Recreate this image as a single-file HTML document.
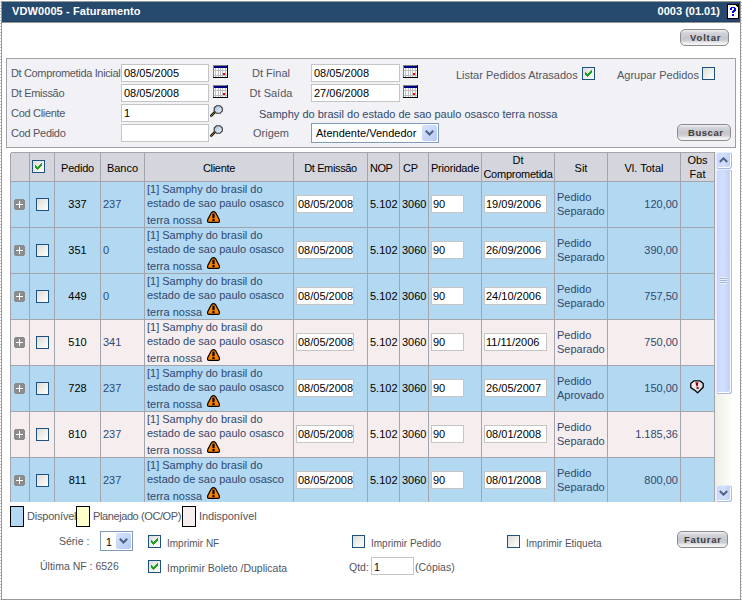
<!DOCTYPE html>
<html><head><meta charset="utf-8"><style>
html,body{margin:0;padding:0;background:#fff;width:742px;height:601px;overflow:hidden;position:relative}
body{font-family:"Liberation Sans",sans-serif;font-size:11px}
.t{position:absolute;white-space:nowrap;line-height:13px;font-family:"Liberation Sans",sans-serif}
</style></head><body>
<div style="position:absolute;left:0;top:0;width:1px;height:601px;background:repeating-linear-gradient(#fff 0 2px,#c4c4c4 2px 3px)"></div>
<div style="position:absolute;left:741px;top:0;width:1px;height:601px;background:repeating-linear-gradient(#fff 0 2px,#c4c4c4 2px 3px)"></div>
<div style="position:absolute;left:1px;top:1px;width:740px;height:599px;box-sizing:border-box;border:1px solid #9a9a9a;"></div>
<div style="position:absolute;left:2px;top:2px;width:738px;height:20px;box-sizing:border-box;background:#264a6e;border-bottom:1px solid #1f4068;"></div>
<div style="position:absolute;left:2px;top:22px;width:738px;height:1px;box-sizing:border-box;background:#9a9690;"></div>
<div class="t" style="left:12px;top:5px;font-size:11px;color:#fff;font-weight:bold;letter-spacing:0.1px;">VDW0005 - Faturamento</div>
<div class="t" style="right:22px;top:5px;font-size:11px;color:#fff;font-weight:bold;">0003 (01.01)</div>
<svg style="position:absolute;left:726px;top:3px" width="14" height="17" shape-rendering="crispEdges"><rect x="0" y="0" width="14" height="17" fill="#2e3d68"/><g transform="translate(1,1)"><rect x="0" y="0" width="12" height="15" fill="#000"/><path d="M1 1H9V2H10V3H11V14H1Z" fill="#fff"/><rect x="2" y="2" width="1" height="1" fill="#ffff00"/><rect x="2" y="4" width="1" height="1" fill="#ffff00"/><rect x="2" y="6" width="1" height="1" fill="#ffff00"/><rect x="2" y="8" width="1" height="1" fill="#ffff00"/><rect x="2" y="10" width="1" height="1" fill="#ffff00"/><rect x="2" y="12" width="1" height="1" fill="#ffff00"/><rect x="4" y="1" width="1" height="1" fill="#ffff00"/><rect x="4" y="3" width="1" height="1" fill="#ffff00"/><rect x="4" y="9" width="1" height="1" fill="#ffff00"/><rect x="4" y="11" width="1" height="1" fill="#ffff00"/><rect x="6" y="1" width="1" height="1" fill="#ffff00"/><rect x="6" y="12" width="1" height="1" fill="#ffff00"/><rect x="8" y="1" width="1" height="1" fill="#ffff00"/><rect x="8" y="7" width="1" height="1" fill="#ffff00"/><rect x="8" y="9" width="1" height="1" fill="#ffff00"/><rect x="8" y="11" width="1" height="1" fill="#ffff00"/><rect x="9" y="2" width="1" height="1" fill="#ffff00"/><rect x="4" y="5" width="1" height="1" fill="#ffff00"/><rect x="6" y="3" width="1" height="1" fill="#ffff00"/><rect x="4" y="3" width="1" height="1" fill="#0000ff"/><rect x="5" y="3" width="1" height="1" fill="#0000ff"/><rect x="6" y="3" width="1" height="1" fill="#0000ff"/><rect x="7" y="3" width="1" height="1" fill="#0000ff"/><rect x="3" y="4" width="1" height="1" fill="#0000ff"/><rect x="4" y="4" width="1" height="1" fill="#0000ff"/><rect x="7" y="4" width="1" height="1" fill="#0000ff"/><rect x="8" y="4" width="1" height="1" fill="#0000ff"/><rect x="3" y="5" width="1" height="1" fill="#0000ff"/><rect x="4" y="5" width="1" height="1" fill="#0000ff"/><rect x="7" y="5" width="1" height="1" fill="#0000ff"/><rect x="8" y="5" width="1" height="1" fill="#0000ff"/><rect x="6" y="6" width="1" height="1" fill="#0000ff"/><rect x="7" y="6" width="1" height="1" fill="#0000ff"/><rect x="8" y="6" width="1" height="1" fill="#0000ff"/><rect x="5" y="7" width="1" height="1" fill="#0000ff"/><rect x="6" y="7" width="1" height="1" fill="#0000ff"/><rect x="7" y="7" width="1" height="1" fill="#0000ff"/><rect x="5" y="8" width="1" height="1" fill="#0000ff"/><rect x="6" y="8" width="1" height="1" fill="#0000ff"/><rect x="5" y="10" width="1" height="1" fill="#0000ff"/><rect x="6" y="10" width="1" height="1" fill="#0000ff"/><rect x="5" y="11" width="1" height="1" fill="#0000ff"/><rect x="6" y="11" width="1" height="1" fill="#0000ff"/></g></svg>
<div style="position:absolute;left:680px;top:29px;width:49px;height:17px;box-sizing:border-box;border:1px solid #8c8c8c;border-radius:5px;background:linear-gradient(#f0f0f3 0%,#d2d2d9 20%,#c5c5cd 55%,#d0d0d6 72%,#ececef 85%,#f6f6f6 100%);"></div>
<div class="t" style="left:690px;top:31px;font-size:9.5px;color:#3e3e3e;font-weight:bold;letter-spacing:0.85px;">Voltar</div>
<div style="position:absolute;left:6px;top:58px;width:730px;height:90px;box-sizing:border-box;background:#f1f1f6;border:1px solid #a0a0a0;"></div>
<div class="t" style="left:11px;top:67px;font-size:11px;color:#52565f;letter-spacing:-0.35px;">Dt Comprometida Inicial</div>
<div style="position:absolute;left:121px;top:64px;width:88px;height:18px;box-sizing:border-box;background:#fff;border:1px solid #c5c5c5;"></div>
<div class="t" style="left:124px;top:67px;font-size:11px;color:#000;">08/05/2005</div>
<div class="t" style="left:11px;top:87px;font-size:11px;color:#52565f;letter-spacing:-0.3px;">Dt Emissão</div>
<div style="position:absolute;left:121px;top:84px;width:88px;height:18px;box-sizing:border-box;background:#fff;border:1px solid #c5c5c5;"></div>
<div class="t" style="left:124px;top:87px;font-size:11px;color:#000;">08/05/2008</div>
<div class="t" style="left:11px;top:107px;font-size:11px;color:#52565f;letter-spacing:-0.3px;">Cod Cliente</div>
<div style="position:absolute;left:121px;top:104px;width:88px;height:18px;box-sizing:border-box;background:#fff;border:1px solid #c5c5c5;"></div>
<div class="t" style="left:124px;top:107px;font-size:11px;color:#000;">1</div>
<div class="t" style="left:11px;top:127px;font-size:11px;color:#52565f;letter-spacing:-0.3px;">Cod Pedido</div>
<div style="position:absolute;left:121px;top:124px;width:88px;height:18px;box-sizing:border-box;background:#fff;border:1px solid #c5c5c5;"></div>
<svg style="position:absolute;left:213px;top:65px" width="15" height="13" shape-rendering="crispEdges"><rect x="0" y="0" width="15" height="13" fill="#000"/><rect x="0" y="0" width="14" height="12" fill="#808080"/><rect x="1" y="3" width="13" height="9" fill="#fff"/><rect x="1" y="1" width="13" height="2" fill="#000080"/><rect x="2" y="3" width="1" height="9" fill="#c0c0c0"/><rect x="5" y="3" width="1" height="9" fill="#c0c0c0"/><rect x="7" y="3" width="1" height="9" fill="#c0c0c0"/><rect x="9" y="3" width="1" height="9" fill="#c0c0c0"/><rect x="12" y="3" width="1" height="9" fill="#c0c0c0"/><rect x="1" y="5" width="13" height="1" fill="#c0c0c0"/><rect x="1" y="10" width="13" height="1" fill="#c0c0c0"/><rect x="10" y="8" width="2" height="2" fill="#ff0000"/></svg>
<svg style="position:absolute;left:213px;top:85px" width="15" height="13" shape-rendering="crispEdges"><rect x="0" y="0" width="15" height="13" fill="#000"/><rect x="0" y="0" width="14" height="12" fill="#808080"/><rect x="1" y="3" width="13" height="9" fill="#fff"/><rect x="1" y="1" width="13" height="2" fill="#000080"/><rect x="2" y="3" width="1" height="9" fill="#c0c0c0"/><rect x="5" y="3" width="1" height="9" fill="#c0c0c0"/><rect x="7" y="3" width="1" height="9" fill="#c0c0c0"/><rect x="9" y="3" width="1" height="9" fill="#c0c0c0"/><rect x="12" y="3" width="1" height="9" fill="#c0c0c0"/><rect x="1" y="5" width="13" height="1" fill="#c0c0c0"/><rect x="1" y="10" width="13" height="1" fill="#c0c0c0"/><rect x="10" y="8" width="2" height="2" fill="#ff0000"/></svg>
<svg style="position:absolute;left:210px;top:105px" width="13" height="12"><defs><linearGradient id="mg" x1="0" y1="0" x2="1" y2="1"><stop offset="0" stop-color="#a9c0e0"/><stop offset="0.6" stop-color="#d0def0"/><stop offset="1" stop-color="#ffffff"/></linearGradient></defs><line x1="1.3" y1="10.7" x2="5.6" y2="6.4" stroke="#111" stroke-width="2.4" stroke-linecap="round"/><line x1="1.3" y1="10.7" x2="5.6" y2="6.4" stroke="#f0b000" stroke-width="1" stroke-dasharray="0.9 0.6"/><path d="M6.5 0.7 H10 L12.3 3 V6 L10 8.3 H6.5 L4.2 6 V3 Z" fill="url(#mg)" stroke="#333" stroke-width="1.1"/></svg>
<svg style="position:absolute;left:210px;top:125px" width="13" height="12"><defs><linearGradient id="mg" x1="0" y1="0" x2="1" y2="1"><stop offset="0" stop-color="#a9c0e0"/><stop offset="0.6" stop-color="#d0def0"/><stop offset="1" stop-color="#ffffff"/></linearGradient></defs><line x1="1.3" y1="10.7" x2="5.6" y2="6.4" stroke="#111" stroke-width="2.4" stroke-linecap="round"/><line x1="1.3" y1="10.7" x2="5.6" y2="6.4" stroke="#f0b000" stroke-width="1" stroke-dasharray="0.9 0.6"/><path d="M6.5 0.7 H10 L12.3 3 V6 L10 8.3 H6.5 L4.2 6 V3 Z" fill="url(#mg)" stroke="#333" stroke-width="1.1"/></svg>
<div class="t" style="left:240px;width:62px;text-align:center;top:67px;font-size:11px;color:#52565f;">Dt Final</div>
<div class="t" style="left:240px;width:62px;text-align:center;top:87px;font-size:11px;color:#52565f;">Dt Saída</div>
<div class="t" style="left:259px;top:108px;font-size:11px;color:#30496e;">Samphy do brasil do estado de sao paulo osasco terra nossa</div>
<div class="t" style="left:240px;width:62px;text-align:center;top:127px;font-size:11px;color:#52565f;">Origem</div>
<div style="position:absolute;left:311px;top:64px;width:89px;height:18px;box-sizing:border-box;background:#fff;border:1px solid #c5c5c5;"></div>
<div class="t" style="left:314px;top:67px;font-size:11px;color:#000;">08/05/2008</div>
<div style="position:absolute;left:311px;top:84px;width:89px;height:18px;box-sizing:border-box;background:#fff;border:1px solid #c5c5c5;"></div>
<div class="t" style="left:314px;top:87px;font-size:11px;color:#000;">27/06/2008</div>
<svg style="position:absolute;left:403px;top:65px" width="15" height="13" shape-rendering="crispEdges"><rect x="0" y="0" width="15" height="13" fill="#000"/><rect x="0" y="0" width="14" height="12" fill="#808080"/><rect x="1" y="3" width="13" height="9" fill="#fff"/><rect x="1" y="1" width="13" height="2" fill="#000080"/><rect x="2" y="3" width="1" height="9" fill="#c0c0c0"/><rect x="5" y="3" width="1" height="9" fill="#c0c0c0"/><rect x="7" y="3" width="1" height="9" fill="#c0c0c0"/><rect x="9" y="3" width="1" height="9" fill="#c0c0c0"/><rect x="12" y="3" width="1" height="9" fill="#c0c0c0"/><rect x="1" y="5" width="13" height="1" fill="#c0c0c0"/><rect x="1" y="10" width="13" height="1" fill="#c0c0c0"/><rect x="10" y="8" width="2" height="2" fill="#ff0000"/></svg>
<svg style="position:absolute;left:403px;top:85px" width="15" height="13" shape-rendering="crispEdges"><rect x="0" y="0" width="15" height="13" fill="#000"/><rect x="0" y="0" width="14" height="12" fill="#808080"/><rect x="1" y="3" width="13" height="9" fill="#fff"/><rect x="1" y="1" width="13" height="2" fill="#000080"/><rect x="2" y="3" width="1" height="9" fill="#c0c0c0"/><rect x="5" y="3" width="1" height="9" fill="#c0c0c0"/><rect x="7" y="3" width="1" height="9" fill="#c0c0c0"/><rect x="9" y="3" width="1" height="9" fill="#c0c0c0"/><rect x="12" y="3" width="1" height="9" fill="#c0c0c0"/><rect x="1" y="5" width="13" height="1" fill="#c0c0c0"/><rect x="1" y="10" width="13" height="1" fill="#c0c0c0"/><rect x="10" y="8" width="2" height="2" fill="#ff0000"/></svg>
<div style="position:absolute;left:311px;top:123px;width:128px;height:20px;box-sizing:border-box;background:#fff;border:1px solid #7f9db9;"></div>
<div style="position:absolute;left:422px;top:125px;width:15px;height:16px;border-radius:2px;background:linear-gradient(135deg,#d8e4fc,#b4c9f6);"></div>
<svg style="position:absolute;left:425px;top:130px" width="9" height="6"><path d="M0.8 0.8 L4.5 4.5 L8.2 0.8" stroke="#4d6185" stroke-width="2" fill="none"/></svg>
<div class="t" style="left:316px;top:127px;font-size:11px;color:#000;">Atendente/Vendedor</div>
<div class="t" style="left:456px;top:69px;font-size:11px;color:#52565f;">Listar Pedidos Atrasados</div>
<svg style="position:absolute;left:582px;top:67px" width="13" height="13" shape-rendering="crispEdges"><defs><linearGradient id="cbg" x1="0" y1="0" x2="1" y2="1"><stop offset="0" stop-color="#dcdcd7"/><stop offset="1" stop-color="#ffffff"/></linearGradient></defs><rect x="0" y="0" width="13" height="13" fill="#1c5180"/><rect x="1" y="1" width="11" height="11" fill="url(#cbg)"/><rect x="9" y="3" width="1" height="1" fill="#21a121"/><rect x="8" y="4" width="1" height="1" fill="#21a121"/><rect x="9" y="4" width="1" height="1" fill="#21a121"/><rect x="3" y="5" width="1" height="1" fill="#21a121"/><rect x="7" y="5" width="1" height="1" fill="#21a121"/><rect x="8" y="5" width="1" height="1" fill="#21a121"/><rect x="9" y="5" width="1" height="1" fill="#21a121"/><rect x="3" y="6" width="1" height="1" fill="#21a121"/><rect x="4" y="6" width="1" height="1" fill="#21a121"/><rect x="6" y="6" width="1" height="1" fill="#21a121"/><rect x="7" y="6" width="1" height="1" fill="#21a121"/><rect x="8" y="6" width="1" height="1" fill="#21a121"/><rect x="3" y="7" width="1" height="1" fill="#21a121"/><rect x="4" y="7" width="1" height="1" fill="#21a121"/><rect x="5" y="7" width="1" height="1" fill="#21a121"/><rect x="6" y="7" width="1" height="1" fill="#21a121"/><rect x="7" y="7" width="1" height="1" fill="#21a121"/><rect x="4" y="8" width="1" height="1" fill="#21a121"/><rect x="5" y="8" width="1" height="1" fill="#21a121"/><rect x="6" y="8" width="1" height="1" fill="#21a121"/><rect x="5" y="9" width="1" height="1" fill="#21a121"/></svg>
<div class="t" style="left:617px;top:69px;font-size:11px;color:#52565f;">Agrupar Pedidos</div>
<svg style="position:absolute;left:702px;top:67px" width="13" height="13" shape-rendering="crispEdges"><defs><linearGradient id="cbg" x1="0" y1="0" x2="1" y2="1"><stop offset="0" stop-color="#dcdcd7"/><stop offset="1" stop-color="#ffffff"/></linearGradient></defs><rect x="0" y="0" width="13" height="13" fill="#1c5180"/><rect x="1" y="1" width="11" height="11" fill="url(#cbg)"/></svg>
<div style="position:absolute;left:677px;top:124px;width:54px;height:17px;box-sizing:border-box;border:1px solid #8c8c8c;border-radius:5px;background:linear-gradient(#f0f0f3 0%,#d2d2d9 20%,#c5c5cd 55%,#d0d0d6 72%,#ececef 85%,#f6f6f6 100%);"></div>
<div class="t" style="left:688px;top:126px;font-size:9.5px;color:#3e3e3e;font-weight:bold;letter-spacing:0.55px;">Buscar</div>
<div style="position:absolute;left:10px;top:152px;width:705px;height:30px;box-sizing:border-box;background:#d5d6dd;"></div>
<div style="position:absolute;left:10px;top:181px;width:705px;height:47px;box-sizing:border-box;background:#b2d8f2;"></div>
<div style="position:absolute;left:10px;top:227px;width:705px;height:47px;box-sizing:border-box;background:#b2d8f2;"></div>
<div style="position:absolute;left:10px;top:273px;width:705px;height:47px;box-sizing:border-box;background:#b2d8f2;"></div>
<div style="position:absolute;left:10px;top:319px;width:705px;height:47px;box-sizing:border-box;background:#f6eeee;"></div>
<div style="position:absolute;left:10px;top:365px;width:705px;height:47px;box-sizing:border-box;background:#b2d8f2;"></div>
<div style="position:absolute;left:10px;top:411px;width:705px;height:47px;box-sizing:border-box;background:#f6eeee;"></div>
<div style="position:absolute;left:10px;top:457px;width:705px;height:45px;box-sizing:border-box;background:#b2d8f2;"></div>
<div style="position:absolute;left:10px;top:152px;width:1px;height:350px;box-sizing:border-box;background:#a2a5ab;"></div>
<div style="position:absolute;left:29px;top:152px;width:1px;height:350px;box-sizing:border-box;background:#a2a5ab;"></div>
<div style="position:absolute;left:54px;top:152px;width:1px;height:350px;box-sizing:border-box;background:#a2a5ab;"></div>
<div style="position:absolute;left:100px;top:152px;width:1px;height:350px;box-sizing:border-box;background:#a2a5ab;"></div>
<div style="position:absolute;left:144px;top:152px;width:1px;height:350px;box-sizing:border-box;background:#a2a5ab;"></div>
<div style="position:absolute;left:293px;top:152px;width:1px;height:350px;box-sizing:border-box;background:#a2a5ab;"></div>
<div style="position:absolute;left:367px;top:152px;width:1px;height:350px;box-sizing:border-box;background:#a2a5ab;"></div>
<div style="position:absolute;left:399px;top:152px;width:1px;height:350px;box-sizing:border-box;background:#a2a5ab;"></div>
<div style="position:absolute;left:428px;top:152px;width:1px;height:350px;box-sizing:border-box;background:#a2a5ab;"></div>
<div style="position:absolute;left:481px;top:152px;width:1px;height:350px;box-sizing:border-box;background:#a2a5ab;"></div>
<div style="position:absolute;left:554px;top:152px;width:1px;height:350px;box-sizing:border-box;background:#a2a5ab;"></div>
<div style="position:absolute;left:607px;top:152px;width:1px;height:350px;box-sizing:border-box;background:#a2a5ab;"></div>
<div style="position:absolute;left:680px;top:152px;width:1px;height:350px;box-sizing:border-box;background:#a2a5ab;"></div>
<div style="position:absolute;left:714px;top:152px;width:1px;height:350px;box-sizing:border-box;background:#a2a5ab;"></div>
<div style="position:absolute;left:10px;top:181px;width:705px;height:1px;box-sizing:border-box;background:#a2a5ab;"></div>
<div style="position:absolute;left:10px;top:227px;width:705px;height:1px;box-sizing:border-box;background:#a2a5ab;"></div>
<div style="position:absolute;left:10px;top:273px;width:705px;height:1px;box-sizing:border-box;background:#a2a5ab;"></div>
<div style="position:absolute;left:10px;top:319px;width:705px;height:1px;box-sizing:border-box;background:#a2a5ab;"></div>
<div style="position:absolute;left:10px;top:365px;width:705px;height:1px;box-sizing:border-box;background:#a2a5ab;"></div>
<div style="position:absolute;left:10px;top:411px;width:705px;height:1px;box-sizing:border-box;background:#a2a5ab;"></div>
<div style="position:absolute;left:10px;top:457px;width:705px;height:1px;box-sizing:border-box;background:#a2a5ab;"></div>
<div style="position:absolute;left:10px;top:152px;width:705px;height:1px;box-sizing:border-box;background:#a2a5ab;"></div>
<div style="position:absolute;left:10px;top:152px;width:1px;height:1px;box-sizing:border-box;background:#fff;"></div>
<div class="t" style="left:55px;width:45px;text-align:center;top:162px;font-size:11px;color:#000;letter-spacing:-0.25px;">Pedido</div>
<div class="t" style="left:101px;width:43px;text-align:center;top:162px;font-size:11px;color:#000;letter-spacing:0px;">Banco</div>
<div class="t" style="left:145px;width:148px;text-align:center;top:162px;font-size:11px;color:#000;letter-spacing:-0.3px;">Cliente</div>
<div class="t" style="left:294px;width:73px;text-align:center;top:162px;font-size:11px;color:#000;letter-spacing:-0.35px;">Dt Emissão</div>
<div class="t" style="left:429px;width:52px;text-align:center;top:162px;font-size:11px;color:#000;letter-spacing:-0.2px;">Prioridade</div>
<div class="t" style="left:555px;width:52px;text-align:center;top:162px;font-size:11px;color:#000;letter-spacing:0px;">Sit</div>
<div class="t" style="left:608px;width:72px;text-align:center;top:162px;font-size:11px;color:#000;letter-spacing:0px;">Vl. Total</div>
<div class="t" style="left:370px;top:162px;font-size:11px;color:#000;letter-spacing:-0.5px;">NOP</div>
<div class="t" style="left:403px;top:162px;font-size:11px;color:#000;letter-spacing:-0.3px;">CP</div>
<div class="t" style="left:482px;width:72px;text-align:center;top:154px;font-size:11px;color:#000;">Dt</div>
<div class="t" style="left:482px;width:72px;text-align:center;top:168px;font-size:11px;color:#000;letter-spacing:-0.25px;">Comprometida</div>
<div class="t" style="left:681px;width:33px;text-align:center;top:154px;font-size:11px;color:#000;">Obs</div>
<div class="t" style="left:681px;width:33px;text-align:center;top:168px;font-size:11px;color:#000;">Fat</div>
<svg style="position:absolute;left:32px;top:160px" width="13" height="13" shape-rendering="crispEdges"><defs><linearGradient id="cbg" x1="0" y1="0" x2="1" y2="1"><stop offset="0" stop-color="#dcdcd7"/><stop offset="1" stop-color="#ffffff"/></linearGradient></defs><rect x="0" y="0" width="13" height="13" fill="#1c5180"/><rect x="1" y="1" width="11" height="11" fill="url(#cbg)"/><rect x="9" y="3" width="1" height="1" fill="#21a121"/><rect x="8" y="4" width="1" height="1" fill="#21a121"/><rect x="9" y="4" width="1" height="1" fill="#21a121"/><rect x="3" y="5" width="1" height="1" fill="#21a121"/><rect x="7" y="5" width="1" height="1" fill="#21a121"/><rect x="8" y="5" width="1" height="1" fill="#21a121"/><rect x="9" y="5" width="1" height="1" fill="#21a121"/><rect x="3" y="6" width="1" height="1" fill="#21a121"/><rect x="4" y="6" width="1" height="1" fill="#21a121"/><rect x="6" y="6" width="1" height="1" fill="#21a121"/><rect x="7" y="6" width="1" height="1" fill="#21a121"/><rect x="8" y="6" width="1" height="1" fill="#21a121"/><rect x="3" y="7" width="1" height="1" fill="#21a121"/><rect x="4" y="7" width="1" height="1" fill="#21a121"/><rect x="5" y="7" width="1" height="1" fill="#21a121"/><rect x="6" y="7" width="1" height="1" fill="#21a121"/><rect x="7" y="7" width="1" height="1" fill="#21a121"/><rect x="4" y="8" width="1" height="1" fill="#21a121"/><rect x="5" y="8" width="1" height="1" fill="#21a121"/><rect x="6" y="8" width="1" height="1" fill="#21a121"/><rect x="5" y="9" width="1" height="1" fill="#21a121"/></svg>
<svg style="position:absolute;left:14px;top:199px" width="11" height="11" shape-rendering="crispEdges"><path d="M1 0H10V1H11V10H10V11H1V10H0V1H1Z" fill="#8c8c8c"/><rect x="5" y="2" width="1" height="7" fill="#fff"/><rect x="2" y="5" width="7" height="1" fill="#fff"/></svg>
<svg style="position:absolute;left:36px;top:198px" width="13" height="13" shape-rendering="crispEdges"><defs><linearGradient id="cbg" x1="0" y1="0" x2="1" y2="1"><stop offset="0" stop-color="#dcdcd7"/><stop offset="1" stop-color="#ffffff"/></linearGradient></defs><rect x="0" y="0" width="13" height="13" fill="#1c5180"/><rect x="1" y="1" width="11" height="11" fill="url(#cbg)"/></svg>
<div class="t" style="left:55px;width:45px;text-align:center;top:198px;font-size:11px;color:#000;">337</div>
<div class="t" style="left:103px;top:198px;font-size:11px;color:#30496e;">237</div>
<div class="t" style="left:147px;top:183px;font-size:11px;color:#30496e;">[1] Samphy do brasil do</div>
<div class="t" style="left:147px;top:197px;font-size:11px;color:#30496e;">estado de sao paulo osasco</div>
<div class="t" style="left:147px;top:214px;font-size:11px;color:#30496e;">terra nossa</div>
<svg style="position:absolute;left:207px;top:211px" width="13" height="12"><path d="M4.3 1.8 Q6.5 -0.4 8.7 1.8 L12.2 8.6 Q13.1 11.4 10.8 11.4 L2.2 11.4 Q-0.1 11.4 0.8 8.6 Z" fill="#ff8000" stroke="#000" stroke-width="1.2"/><rect x="5.4" y="2.6" width="2.2" height="4.6" fill="#000"/><rect x="5.4" y="8.1" width="2.2" height="2" fill="#000"/></svg>
<div style="position:absolute;left:296px;top:195px;width:58px;height:18px;box-sizing:border-box;background:#fff;border:1px solid #c5c5c5;"></div>
<div class="t" style="left:298px;top:198px;font-size:11px;color:#000;">08/05/2008</div>
<div class="t" style="left:370px;top:198px;font-size:11px;color:#000;">5.102</div>
<div class="t" style="left:402px;top:198px;font-size:11px;color:#000;">3060</div>
<div style="position:absolute;left:431px;top:195px;width:33px;height:18px;box-sizing:border-box;background:#fff;border:1px solid #c5c5c5;"></div>
<div class="t" style="left:433px;top:198px;font-size:11px;color:#000;">90</div>
<div style="position:absolute;left:484px;top:195px;width:63px;height:18px;box-sizing:border-box;background:#fff;border:1px solid #c5c5c5;"></div>
<div class="t" style="left:486px;top:198px;font-size:11px;color:#000;">19/09/2006</div>
<div class="t" style="left:557px;top:191px;font-size:11px;color:#30496e;">Pedido</div>
<div class="t" style="left:557px;top:205px;font-size:11px;color:#30496e;">Separado</div>
<div class="t" style="right:64px;top:198px;font-size:11px;color:#30496e;">120,00</div>
<svg style="position:absolute;left:14px;top:245px" width="11" height="11" shape-rendering="crispEdges"><path d="M1 0H10V1H11V10H10V11H1V10H0V1H1Z" fill="#8c8c8c"/><rect x="5" y="2" width="1" height="7" fill="#fff"/><rect x="2" y="5" width="7" height="1" fill="#fff"/></svg>
<svg style="position:absolute;left:36px;top:244px" width="13" height="13" shape-rendering="crispEdges"><defs><linearGradient id="cbg" x1="0" y1="0" x2="1" y2="1"><stop offset="0" stop-color="#dcdcd7"/><stop offset="1" stop-color="#ffffff"/></linearGradient></defs><rect x="0" y="0" width="13" height="13" fill="#1c5180"/><rect x="1" y="1" width="11" height="11" fill="url(#cbg)"/></svg>
<div class="t" style="left:55px;width:45px;text-align:center;top:244px;font-size:11px;color:#000;">351</div>
<div class="t" style="left:103px;top:244px;font-size:11px;color:#30496e;">0</div>
<div class="t" style="left:147px;top:229px;font-size:11px;color:#30496e;">[1] Samphy do brasil do</div>
<div class="t" style="left:147px;top:243px;font-size:11px;color:#30496e;">estado de sao paulo osasco</div>
<div class="t" style="left:147px;top:260px;font-size:11px;color:#30496e;">terra nossa</div>
<svg style="position:absolute;left:207px;top:257px" width="13" height="12"><path d="M4.3 1.8 Q6.5 -0.4 8.7 1.8 L12.2 8.6 Q13.1 11.4 10.8 11.4 L2.2 11.4 Q-0.1 11.4 0.8 8.6 Z" fill="#ff8000" stroke="#000" stroke-width="1.2"/><rect x="5.4" y="2.6" width="2.2" height="4.6" fill="#000"/><rect x="5.4" y="8.1" width="2.2" height="2" fill="#000"/></svg>
<div style="position:absolute;left:296px;top:241px;width:58px;height:18px;box-sizing:border-box;background:#fff;border:1px solid #c5c5c5;"></div>
<div class="t" style="left:298px;top:244px;font-size:11px;color:#000;">08/05/2008</div>
<div class="t" style="left:370px;top:244px;font-size:11px;color:#000;">5.102</div>
<div class="t" style="left:402px;top:244px;font-size:11px;color:#000;">3060</div>
<div style="position:absolute;left:431px;top:241px;width:33px;height:18px;box-sizing:border-box;background:#fff;border:1px solid #c5c5c5;"></div>
<div class="t" style="left:433px;top:244px;font-size:11px;color:#000;">90</div>
<div style="position:absolute;left:484px;top:241px;width:63px;height:18px;box-sizing:border-box;background:#fff;border:1px solid #c5c5c5;"></div>
<div class="t" style="left:486px;top:244px;font-size:11px;color:#000;">26/09/2006</div>
<div class="t" style="left:557px;top:237px;font-size:11px;color:#30496e;">Pedido</div>
<div class="t" style="left:557px;top:251px;font-size:11px;color:#30496e;">Separado</div>
<div class="t" style="right:64px;top:244px;font-size:11px;color:#30496e;">390,00</div>
<svg style="position:absolute;left:14px;top:291px" width="11" height="11" shape-rendering="crispEdges"><path d="M1 0H10V1H11V10H10V11H1V10H0V1H1Z" fill="#8c8c8c"/><rect x="5" y="2" width="1" height="7" fill="#fff"/><rect x="2" y="5" width="7" height="1" fill="#fff"/></svg>
<svg style="position:absolute;left:36px;top:290px" width="13" height="13" shape-rendering="crispEdges"><defs><linearGradient id="cbg" x1="0" y1="0" x2="1" y2="1"><stop offset="0" stop-color="#dcdcd7"/><stop offset="1" stop-color="#ffffff"/></linearGradient></defs><rect x="0" y="0" width="13" height="13" fill="#1c5180"/><rect x="1" y="1" width="11" height="11" fill="url(#cbg)"/></svg>
<div class="t" style="left:55px;width:45px;text-align:center;top:290px;font-size:11px;color:#000;">449</div>
<div class="t" style="left:103px;top:290px;font-size:11px;color:#30496e;">0</div>
<div class="t" style="left:147px;top:275px;font-size:11px;color:#30496e;">[1] Samphy do brasil do</div>
<div class="t" style="left:147px;top:289px;font-size:11px;color:#30496e;">estado de sao paulo osasco</div>
<div class="t" style="left:147px;top:306px;font-size:11px;color:#30496e;">terra nossa</div>
<svg style="position:absolute;left:207px;top:303px" width="13" height="12"><path d="M4.3 1.8 Q6.5 -0.4 8.7 1.8 L12.2 8.6 Q13.1 11.4 10.8 11.4 L2.2 11.4 Q-0.1 11.4 0.8 8.6 Z" fill="#ff8000" stroke="#000" stroke-width="1.2"/><rect x="5.4" y="2.6" width="2.2" height="4.6" fill="#000"/><rect x="5.4" y="8.1" width="2.2" height="2" fill="#000"/></svg>
<div style="position:absolute;left:296px;top:287px;width:58px;height:18px;box-sizing:border-box;background:#fff;border:1px solid #c5c5c5;"></div>
<div class="t" style="left:298px;top:290px;font-size:11px;color:#000;">08/05/2008</div>
<div class="t" style="left:370px;top:290px;font-size:11px;color:#000;">5.102</div>
<div class="t" style="left:402px;top:290px;font-size:11px;color:#000;">3060</div>
<div style="position:absolute;left:431px;top:287px;width:33px;height:18px;box-sizing:border-box;background:#fff;border:1px solid #c5c5c5;"></div>
<div class="t" style="left:433px;top:290px;font-size:11px;color:#000;">90</div>
<div style="position:absolute;left:484px;top:287px;width:63px;height:18px;box-sizing:border-box;background:#fff;border:1px solid #c5c5c5;"></div>
<div class="t" style="left:486px;top:290px;font-size:11px;color:#000;">24/10/2006</div>
<div class="t" style="left:557px;top:283px;font-size:11px;color:#30496e;">Pedido</div>
<div class="t" style="left:557px;top:297px;font-size:11px;color:#30496e;">Separado</div>
<div class="t" style="right:64px;top:290px;font-size:11px;color:#30496e;">757,50</div>
<svg style="position:absolute;left:14px;top:337px" width="11" height="11" shape-rendering="crispEdges"><path d="M1 0H10V1H11V10H10V11H1V10H0V1H1Z" fill="#8c8c8c"/><rect x="5" y="2" width="1" height="7" fill="#fff"/><rect x="2" y="5" width="7" height="1" fill="#fff"/></svg>
<svg style="position:absolute;left:36px;top:336px" width="13" height="13" shape-rendering="crispEdges"><defs><linearGradient id="cbg" x1="0" y1="0" x2="1" y2="1"><stop offset="0" stop-color="#dcdcd7"/><stop offset="1" stop-color="#ffffff"/></linearGradient></defs><rect x="0" y="0" width="13" height="13" fill="#1c5180"/><rect x="1" y="1" width="11" height="11" fill="url(#cbg)"/></svg>
<div class="t" style="left:55px;width:45px;text-align:center;top:336px;font-size:11px;color:#000;">510</div>
<div class="t" style="left:103px;top:336px;font-size:11px;color:#30496e;">341</div>
<div class="t" style="left:147px;top:321px;font-size:11px;color:#30496e;">[1] Samphy do brasil do</div>
<div class="t" style="left:147px;top:335px;font-size:11px;color:#30496e;">estado de sao paulo osasco</div>
<div class="t" style="left:147px;top:352px;font-size:11px;color:#30496e;">terra nossa</div>
<svg style="position:absolute;left:207px;top:349px" width="13" height="12"><path d="M4.3 1.8 Q6.5 -0.4 8.7 1.8 L12.2 8.6 Q13.1 11.4 10.8 11.4 L2.2 11.4 Q-0.1 11.4 0.8 8.6 Z" fill="#ff8000" stroke="#000" stroke-width="1.2"/><rect x="5.4" y="2.6" width="2.2" height="4.6" fill="#000"/><rect x="5.4" y="8.1" width="2.2" height="2" fill="#000"/></svg>
<div style="position:absolute;left:296px;top:333px;width:58px;height:18px;box-sizing:border-box;background:#fff;border:1px solid #c5c5c5;"></div>
<div class="t" style="left:298px;top:336px;font-size:11px;color:#000;">08/05/2008</div>
<div class="t" style="left:370px;top:336px;font-size:11px;color:#000;">5.102</div>
<div class="t" style="left:402px;top:336px;font-size:11px;color:#000;">3060</div>
<div style="position:absolute;left:431px;top:333px;width:33px;height:18px;box-sizing:border-box;background:#fff;border:1px solid #c5c5c5;"></div>
<div class="t" style="left:433px;top:336px;font-size:11px;color:#000;">90</div>
<div style="position:absolute;left:484px;top:333px;width:63px;height:18px;box-sizing:border-box;background:#fff;border:1px solid #c5c5c5;"></div>
<div class="t" style="left:486px;top:336px;font-size:11px;color:#000;">11/11/2006</div>
<div class="t" style="left:557px;top:329px;font-size:11px;color:#30496e;">Pedido</div>
<div class="t" style="left:557px;top:343px;font-size:11px;color:#30496e;">Separado</div>
<div class="t" style="right:64px;top:336px;font-size:11px;color:#30496e;">750,00</div>
<svg style="position:absolute;left:14px;top:383px" width="11" height="11" shape-rendering="crispEdges"><path d="M1 0H10V1H11V10H10V11H1V10H0V1H1Z" fill="#8c8c8c"/><rect x="5" y="2" width="1" height="7" fill="#fff"/><rect x="2" y="5" width="7" height="1" fill="#fff"/></svg>
<svg style="position:absolute;left:36px;top:382px" width="13" height="13" shape-rendering="crispEdges"><defs><linearGradient id="cbg" x1="0" y1="0" x2="1" y2="1"><stop offset="0" stop-color="#dcdcd7"/><stop offset="1" stop-color="#ffffff"/></linearGradient></defs><rect x="0" y="0" width="13" height="13" fill="#1c5180"/><rect x="1" y="1" width="11" height="11" fill="url(#cbg)"/></svg>
<div class="t" style="left:55px;width:45px;text-align:center;top:382px;font-size:11px;color:#000;">728</div>
<div class="t" style="left:103px;top:382px;font-size:11px;color:#30496e;">237</div>
<div class="t" style="left:147px;top:367px;font-size:11px;color:#30496e;">[1] Samphy do brasil do</div>
<div class="t" style="left:147px;top:381px;font-size:11px;color:#30496e;">estado de sao paulo osasco</div>
<div class="t" style="left:147px;top:398px;font-size:11px;color:#30496e;">terra nossa</div>
<svg style="position:absolute;left:207px;top:395px" width="13" height="12"><path d="M4.3 1.8 Q6.5 -0.4 8.7 1.8 L12.2 8.6 Q13.1 11.4 10.8 11.4 L2.2 11.4 Q-0.1 11.4 0.8 8.6 Z" fill="#ff8000" stroke="#000" stroke-width="1.2"/><rect x="5.4" y="2.6" width="2.2" height="4.6" fill="#000"/><rect x="5.4" y="8.1" width="2.2" height="2" fill="#000"/></svg>
<div style="position:absolute;left:296px;top:379px;width:58px;height:18px;box-sizing:border-box;background:#fff;border:1px solid #c5c5c5;"></div>
<div class="t" style="left:298px;top:382px;font-size:11px;color:#000;">08/05/2008</div>
<div class="t" style="left:370px;top:382px;font-size:11px;color:#000;">5.102</div>
<div class="t" style="left:402px;top:382px;font-size:11px;color:#000;">3060</div>
<div style="position:absolute;left:431px;top:379px;width:33px;height:18px;box-sizing:border-box;background:#fff;border:1px solid #c5c5c5;"></div>
<div class="t" style="left:433px;top:382px;font-size:11px;color:#000;">90</div>
<div style="position:absolute;left:484px;top:379px;width:63px;height:18px;box-sizing:border-box;background:#fff;border:1px solid #c5c5c5;"></div>
<div class="t" style="left:486px;top:382px;font-size:11px;color:#000;">26/05/2007</div>
<div class="t" style="left:557px;top:375px;font-size:11px;color:#30496e;">Pedido</div>
<div class="t" style="left:557px;top:389px;font-size:11px;color:#30496e;">Aprovado</div>
<div class="t" style="right:64px;top:382px;font-size:11px;color:#30496e;">150,00</div>
<svg style="position:absolute;left:690px;top:380px" width="15" height="15"><defs><linearGradient id="obg" x1="0" y1="0" x2="1" y2="1"><stop offset="0" stop-color="#ffffff"/><stop offset="1" stop-color="#c8c8c8"/></linearGradient></defs><path d="M4.2 0.8 H9.8 L13.2 3.4 V7.2 L7.6 12.9 L5.4 10.8 L0.8 7.6 V3.6 Z" fill="url(#obg)" stroke="#000" stroke-width="1.3" stroke-linejoin="round"/><path d="M5.4 2.2 H8.4 L7.7 6.2 H6.3 Z" fill="#a00000"/><rect x="6.6" y="7.1" width="2" height="1.8" fill="#800000"/></svg>
<svg style="position:absolute;left:14px;top:429px" width="11" height="11" shape-rendering="crispEdges"><path d="M1 0H10V1H11V10H10V11H1V10H0V1H1Z" fill="#8c8c8c"/><rect x="5" y="2" width="1" height="7" fill="#fff"/><rect x="2" y="5" width="7" height="1" fill="#fff"/></svg>
<svg style="position:absolute;left:36px;top:428px" width="13" height="13" shape-rendering="crispEdges"><defs><linearGradient id="cbg" x1="0" y1="0" x2="1" y2="1"><stop offset="0" stop-color="#dcdcd7"/><stop offset="1" stop-color="#ffffff"/></linearGradient></defs><rect x="0" y="0" width="13" height="13" fill="#1c5180"/><rect x="1" y="1" width="11" height="11" fill="url(#cbg)"/></svg>
<div class="t" style="left:55px;width:45px;text-align:center;top:428px;font-size:11px;color:#000;">810</div>
<div class="t" style="left:103px;top:428px;font-size:11px;color:#30496e;">237</div>
<div class="t" style="left:147px;top:413px;font-size:11px;color:#30496e;">[1] Samphy do brasil do</div>
<div class="t" style="left:147px;top:427px;font-size:11px;color:#30496e;">estado de sao paulo osasco</div>
<div class="t" style="left:147px;top:444px;font-size:11px;color:#30496e;">terra nossa</div>
<svg style="position:absolute;left:207px;top:441px" width="13" height="12"><path d="M4.3 1.8 Q6.5 -0.4 8.7 1.8 L12.2 8.6 Q13.1 11.4 10.8 11.4 L2.2 11.4 Q-0.1 11.4 0.8 8.6 Z" fill="#ff8000" stroke="#000" stroke-width="1.2"/><rect x="5.4" y="2.6" width="2.2" height="4.6" fill="#000"/><rect x="5.4" y="8.1" width="2.2" height="2" fill="#000"/></svg>
<div style="position:absolute;left:296px;top:425px;width:58px;height:18px;box-sizing:border-box;background:#fff;border:1px solid #c5c5c5;"></div>
<div class="t" style="left:298px;top:428px;font-size:11px;color:#000;">08/05/2008</div>
<div class="t" style="left:370px;top:428px;font-size:11px;color:#000;">5.102</div>
<div class="t" style="left:402px;top:428px;font-size:11px;color:#000;">3060</div>
<div style="position:absolute;left:431px;top:425px;width:33px;height:18px;box-sizing:border-box;background:#fff;border:1px solid #c5c5c5;"></div>
<div class="t" style="left:433px;top:428px;font-size:11px;color:#000;">90</div>
<div style="position:absolute;left:484px;top:425px;width:63px;height:18px;box-sizing:border-box;background:#fff;border:1px solid #c5c5c5;"></div>
<div class="t" style="left:486px;top:428px;font-size:11px;color:#000;">08/01/2008</div>
<div class="t" style="left:557px;top:421px;font-size:11px;color:#30496e;">Pedido</div>
<div class="t" style="left:557px;top:435px;font-size:11px;color:#30496e;">Separado</div>
<div class="t" style="right:64px;top:428px;font-size:11px;color:#30496e;">1.185,36</div>
<svg style="position:absolute;left:14px;top:475px" width="11" height="11" shape-rendering="crispEdges"><path d="M1 0H10V1H11V10H10V11H1V10H0V1H1Z" fill="#8c8c8c"/><rect x="5" y="2" width="1" height="7" fill="#fff"/><rect x="2" y="5" width="7" height="1" fill="#fff"/></svg>
<svg style="position:absolute;left:36px;top:474px" width="13" height="13" shape-rendering="crispEdges"><defs><linearGradient id="cbg" x1="0" y1="0" x2="1" y2="1"><stop offset="0" stop-color="#dcdcd7"/><stop offset="1" stop-color="#ffffff"/></linearGradient></defs><rect x="0" y="0" width="13" height="13" fill="#1c5180"/><rect x="1" y="1" width="11" height="11" fill="url(#cbg)"/></svg>
<div class="t" style="left:55px;width:45px;text-align:center;top:474px;font-size:11px;color:#000;">811</div>
<div class="t" style="left:103px;top:474px;font-size:11px;color:#30496e;">237</div>
<div class="t" style="left:147px;top:459px;font-size:11px;color:#30496e;">[1] Samphy do brasil do</div>
<div class="t" style="left:147px;top:473px;font-size:11px;color:#30496e;">estado de sao paulo osasco</div>
<div class="t" style="left:147px;top:490px;font-size:11px;color:#30496e;">terra nossa</div>
<svg style="position:absolute;left:207px;top:487px" width="13" height="12"><path d="M4.3 1.8 Q6.5 -0.4 8.7 1.8 L12.2 8.6 Q13.1 11.4 10.8 11.4 L2.2 11.4 Q-0.1 11.4 0.8 8.6 Z" fill="#ff8000" stroke="#000" stroke-width="1.2"/><rect x="5.4" y="2.6" width="2.2" height="4.6" fill="#000"/><rect x="5.4" y="8.1" width="2.2" height="2" fill="#000"/></svg>
<div style="position:absolute;left:296px;top:471px;width:58px;height:18px;box-sizing:border-box;background:#fff;border:1px solid #c5c5c5;"></div>
<div class="t" style="left:298px;top:474px;font-size:11px;color:#000;">08/05/2008</div>
<div class="t" style="left:370px;top:474px;font-size:11px;color:#000;">5.102</div>
<div class="t" style="left:402px;top:474px;font-size:11px;color:#000;">3060</div>
<div style="position:absolute;left:431px;top:471px;width:33px;height:18px;box-sizing:border-box;background:#fff;border:1px solid #c5c5c5;"></div>
<div class="t" style="left:433px;top:474px;font-size:11px;color:#000;">90</div>
<div style="position:absolute;left:484px;top:471px;width:63px;height:18px;box-sizing:border-box;background:#fff;border:1px solid #c5c5c5;"></div>
<div class="t" style="left:486px;top:474px;font-size:11px;color:#000;">08/01/2008</div>
<div class="t" style="left:557px;top:467px;font-size:11px;color:#30496e;">Pedido</div>
<div class="t" style="left:557px;top:481px;font-size:11px;color:#30496e;">Separado</div>
<div class="t" style="right:64px;top:474px;font-size:11px;color:#30496e;">800,00</div>
<div style="position:absolute;left:3px;top:502px;width:737px;height:97px;box-sizing:border-box;background:#fff;"></div>
<div style="position:absolute;left:715px;top:152px;width:17px;height:350px;box-sizing:border-box;background:linear-gradient(90deg,#efeee6,#fdfdfa);"></div>
<div style="position:absolute;left:716px;top:152px;width:16px;height:17px;box-sizing:border-box;border:1px solid;border-color:#e4ecfd #a4b9ee #a4b9ee #e4ecfd;border-radius:3px;box-shadow:inset -1px -1px 0 #fff;background:linear-gradient(90deg,#c9d7fc,#d3dffd 45%,#bccdf8);"></div>
<svg style="position:absolute;left:719px;top:157px" width="9" height="6"><path d="M0.8 5 L4.5 1.3 L8.2 5" stroke="#4d6185" stroke-width="2" fill="none"/></svg>
<div style="position:absolute;left:716px;top:169px;width:16px;height:225px;box-sizing:border-box;border:1px solid;border-color:#e4ecfd #a4b9ee #a4b9ee #e4ecfd;border-radius:3px;box-shadow:inset -1px -1px 0 #fff;background:linear-gradient(90deg,#c9d7fc,#d3dffd 45%,#bccdf8);"></div>
<div style="position:absolute;left:720px;top:277px;width:7px;height:7px;background:repeating-linear-gradient(#eef3fe 0 1px,#9fb3e0 1px 2px)"></div>
<div style="position:absolute;left:716px;top:485px;width:16px;height:17px;box-sizing:border-box;border:1px solid;border-color:#e4ecfd #a4b9ee #a4b9ee #e4ecfd;border-radius:3px;box-shadow:inset -1px -1px 0 #fff;background:linear-gradient(90deg,#c9d7fc,#d3dffd 45%,#bccdf8);"></div>
<svg style="position:absolute;left:719px;top:490px" width="9" height="6"><path d="M0.8 1 L4.5 4.7 L8.2 1" stroke="#4d6185" stroke-width="2" fill="none"/></svg>
<div style="position:absolute;left:10px;top:506px;width:14px;height:21px;box-sizing:border-box;background:#b2d8f2;border:1px solid #000;"></div>
<div class="t" style="left:27px;top:510px;font-size:11px;color:#52565f;letter-spacing:-0.2px;">Disponível</div>
<div style="position:absolute;left:76px;top:506px;width:14px;height:21px;box-sizing:border-box;background:#ffffcc;border:1px solid #000;"></div>
<div class="t" style="left:93px;top:510px;font-size:11px;color:#52565f;letter-spacing:-0.4px;">Planejado (OC/OP)</div>
<div style="position:absolute;left:182px;top:506px;width:14px;height:21px;box-sizing:border-box;background:#f6eeee;border:1px solid #000;"></div>
<div class="t" style="left:199px;top:510px;font-size:11px;color:#52565f;letter-spacing:-0.1px;">Indisponível</div>
<div class="t" style="left:59px;top:535px;font-size:10.5px;color:#52565f;">Série :</div>
<div style="position:absolute;left:100px;top:531px;width:33px;height:20px;box-sizing:border-box;background:#fff;border:1px solid #7f9db9;"></div>
<div style="position:absolute;left:116px;top:533px;width:15px;height:16px;border-radius:2px;background:linear-gradient(135deg,#d8e4fc,#b4c9f6);"></div>
<svg style="position:absolute;left:119px;top:538px" width="9" height="6"><path d="M0.8 0.8 L4.5 4.5 L8.2 0.8" stroke="#4d6185" stroke-width="2" fill="none"/></svg>
<div class="t" style="left:106px;top:536px;font-size:10.5px;color:#000;">1</div>
<svg style="position:absolute;left:148px;top:535px" width="13" height="13" shape-rendering="crispEdges"><defs><linearGradient id="cbg" x1="0" y1="0" x2="1" y2="1"><stop offset="0" stop-color="#dcdcd7"/><stop offset="1" stop-color="#ffffff"/></linearGradient></defs><rect x="0" y="0" width="13" height="13" fill="#1c5180"/><rect x="1" y="1" width="11" height="11" fill="url(#cbg)"/><rect x="9" y="3" width="1" height="1" fill="#21a121"/><rect x="8" y="4" width="1" height="1" fill="#21a121"/><rect x="9" y="4" width="1" height="1" fill="#21a121"/><rect x="3" y="5" width="1" height="1" fill="#21a121"/><rect x="7" y="5" width="1" height="1" fill="#21a121"/><rect x="8" y="5" width="1" height="1" fill="#21a121"/><rect x="9" y="5" width="1" height="1" fill="#21a121"/><rect x="3" y="6" width="1" height="1" fill="#21a121"/><rect x="4" y="6" width="1" height="1" fill="#21a121"/><rect x="6" y="6" width="1" height="1" fill="#21a121"/><rect x="7" y="6" width="1" height="1" fill="#21a121"/><rect x="8" y="6" width="1" height="1" fill="#21a121"/><rect x="3" y="7" width="1" height="1" fill="#21a121"/><rect x="4" y="7" width="1" height="1" fill="#21a121"/><rect x="5" y="7" width="1" height="1" fill="#21a121"/><rect x="6" y="7" width="1" height="1" fill="#21a121"/><rect x="7" y="7" width="1" height="1" fill="#21a121"/><rect x="4" y="8" width="1" height="1" fill="#21a121"/><rect x="5" y="8" width="1" height="1" fill="#21a121"/><rect x="6" y="8" width="1" height="1" fill="#21a121"/><rect x="5" y="9" width="1" height="1" fill="#21a121"/></svg>
<div class="t" style="left:167px;top:537px;font-size:10px;color:#52565f;">Imprimir NF</div>
<svg style="position:absolute;left:352px;top:535px" width="13" height="13" shape-rendering="crispEdges"><defs><linearGradient id="cbg" x1="0" y1="0" x2="1" y2="1"><stop offset="0" stop-color="#dcdcd7"/><stop offset="1" stop-color="#ffffff"/></linearGradient></defs><rect x="0" y="0" width="13" height="13" fill="#1c5180"/><rect x="1" y="1" width="11" height="11" fill="url(#cbg)"/></svg>
<div class="t" style="left:371px;top:537px;font-size:10px;color:#52565f;">Imprimir Pedido</div>
<svg style="position:absolute;left:507px;top:535px" width="13" height="13" shape-rendering="crispEdges"><defs><linearGradient id="cbg" x1="0" y1="0" x2="1" y2="1"><stop offset="0" stop-color="#dcdcd7"/><stop offset="1" stop-color="#ffffff"/></linearGradient></defs><rect x="0" y="0" width="13" height="13" fill="#1c5180"/><rect x="1" y="1" width="11" height="11" fill="url(#cbg)"/></svg>
<div class="t" style="left:526px;top:537px;font-size:10px;color:#52565f;">Imprimir Etiqueta</div>
<div style="position:absolute;left:677px;top:531px;width:51px;height:17px;box-sizing:border-box;border:1px solid #8c8c8c;border-radius:5px;background:linear-gradient(#f0f0f3 0%,#d2d2d9 20%,#c5c5cd 55%,#d0d0d6 72%,#ececef 85%,#f6f6f6 100%);"></div>
<div class="t" style="left:684px;top:533px;font-size:9.5px;color:#3e3e3e;font-weight:bold;letter-spacing:0.7px;">Faturar</div>
<div class="t" style="left:40px;top:560px;font-size:10.5px;color:#52565f;">Última NF : 6526</div>
<svg style="position:absolute;left:148px;top:560px" width="13" height="13" shape-rendering="crispEdges"><defs><linearGradient id="cbg" x1="0" y1="0" x2="1" y2="1"><stop offset="0" stop-color="#dcdcd7"/><stop offset="1" stop-color="#ffffff"/></linearGradient></defs><rect x="0" y="0" width="13" height="13" fill="#1c5180"/><rect x="1" y="1" width="11" height="11" fill="url(#cbg)"/><rect x="9" y="3" width="1" height="1" fill="#21a121"/><rect x="8" y="4" width="1" height="1" fill="#21a121"/><rect x="9" y="4" width="1" height="1" fill="#21a121"/><rect x="3" y="5" width="1" height="1" fill="#21a121"/><rect x="7" y="5" width="1" height="1" fill="#21a121"/><rect x="8" y="5" width="1" height="1" fill="#21a121"/><rect x="9" y="5" width="1" height="1" fill="#21a121"/><rect x="3" y="6" width="1" height="1" fill="#21a121"/><rect x="4" y="6" width="1" height="1" fill="#21a121"/><rect x="6" y="6" width="1" height="1" fill="#21a121"/><rect x="7" y="6" width="1" height="1" fill="#21a121"/><rect x="8" y="6" width="1" height="1" fill="#21a121"/><rect x="3" y="7" width="1" height="1" fill="#21a121"/><rect x="4" y="7" width="1" height="1" fill="#21a121"/><rect x="5" y="7" width="1" height="1" fill="#21a121"/><rect x="6" y="7" width="1" height="1" fill="#21a121"/><rect x="7" y="7" width="1" height="1" fill="#21a121"/><rect x="4" y="8" width="1" height="1" fill="#21a121"/><rect x="5" y="8" width="1" height="1" fill="#21a121"/><rect x="6" y="8" width="1" height="1" fill="#21a121"/><rect x="5" y="9" width="1" height="1" fill="#21a121"/></svg>
<div class="t" style="left:167px;top:562px;font-size:10.5px;color:#52565f;">Imprimir Boleto /Duplicata</div>
<div class="t" style="left:349px;top:561px;font-size:10.5px;color:#52565f;">Qtd:</div>
<div style="position:absolute;left:371px;top:557px;width:43px;height:18px;box-sizing:border-box;background:#fff;border:1px solid #c5c5c5;"></div>
<div class="t" style="left:374px;top:561px;font-size:10.5px;color:#000;">1</div>
<div class="t" style="left:415px;top:561px;font-size:10.5px;color:#52565f;">(Cópias)</div>
</body></html>
